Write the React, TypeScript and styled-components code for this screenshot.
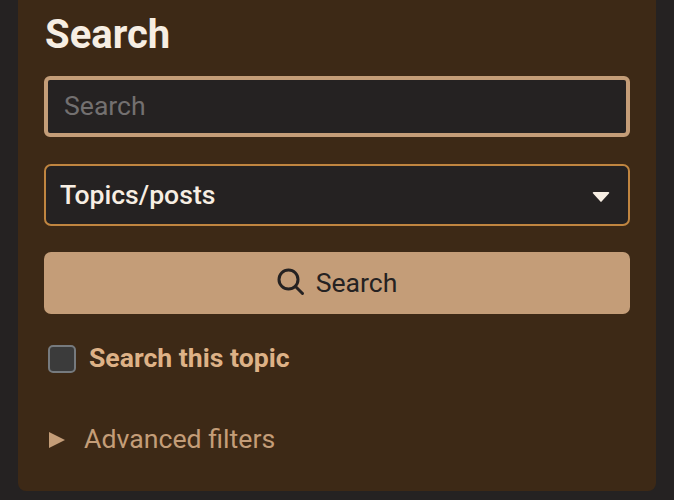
import { createGlobalStyle } from "styled-components";
import styled from "styled-components";

const GlobalStyle = createGlobalStyle`
  html, body {
    margin: 0;
    padding: 0;
    height: 100%;
    overflow: hidden;
    background-color: #252222;
    font-family: Roboto, "Liberation Sans", sans-serif;
  }
`;

const Page = styled.div`
  width: 674px;
  height: 500px;
  padding: 0 18px 9px;
  box-sizing: border-box;
  background-color: #252222;
`;

const Panel = styled.section`
  display: flex;
  flex-direction: column;
  height: 491px;
  box-sizing: border-box;
  padding: 0 26px;
  background-color: #3d2916;
  border-radius: 0 0 8px 8px;
`;

const Title = styled.h2`
  margin: 14px 0 0 1px;
  font-size: 40px;
  line-height: 42px;
  font-weight: 700;
  color: #f7eee3;
`;

const SearchInput = styled.input`
  display: block;
  box-sizing: border-box;
  width: 586px;
  height: 61px;
  margin-top: 20px;
  padding: 0 16px 2px;
  background-color: #252222;
  border: 4px solid #c49d78;
  border-radius: 6px;
  outline: none;
  font-family: inherit;
  font-size: 26.6px;
  color: #f7eee3;

  &::placeholder {
    color: #737070;
    opacity: 1;
  }
`;

const SelectBox = styled.div`
  display: flex;
  align-items: center;
  justify-content: space-between;
  box-sizing: border-box;
  width: 586px;
  height: 62px;
  margin-top: 27px;
  padding: 0 18px 2px 14px;
  background-color: #252222;
  border: 2px solid #c08540;
  border-radius: 7px;
  font-size: 26.6px;
  font-weight: 500;
  color: #f7eee3;

  svg {
    margin-top: 5px;
  }
`;

const SearchButton = styled.button`
  display: flex;
  align-items: center;
  justify-content: center;
  gap: 11px;
  width: 586px;
  height: 62px;
  margin-top: 26px;
  padding: 0 0 2px;
  background-color: #c49d78;
  border: none;
  border-radius: 7px;
  font-family: inherit;
  font-size: 26.6px;
  color: #252222;
`;

const CheckRow = styled.label`
  display: flex;
  align-items: center;
  gap: 13px;
  margin: 28px 0 0 4px;
  font-size: 26.6px;
  font-weight: 700;
  color: #deb287;
`;

const CheckBox = styled.input.attrs({ type: "checkbox" })`
  appearance: none;
  box-sizing: border-box;
  width: 28px;
  height: 28px;
  margin: 2px 0 0;
  background-color: #3b3b3b;
  border: 2px solid #767a7e;
  border-radius: 5px;
`;

const Filters = styled.div`
  display: flex;
  align-items: center;
  gap: 19px;
  margin: 50px 0 0 5px;
  font-size: 26.7px;
  color: #c49d78;

  svg {
    margin-top: 2px;
  }
`;

export default function App() {
  return (
    <>
      <GlobalStyle />
      <Page>
        <Panel>
          <Title>Search</Title>
          <SearchInput placeholder="Search" />
          <SelectBox>
            <span>Topics/posts</span>
            <svg width="18" height="12" viewBox="0 0 18 12">
              <path d="M1.500 1h15a.8.8 0 0 1 .6 1.300L9.600 10.600a.8.8 0 0 1-1.200 0L.9 2.300A.8.8 0 0 1 1.500 1z" fill="#f7eee3" />
            </svg>
          </SelectBox>
          <SearchButton>
            <svg width="28" height="28" viewBox="0 0 28 28" fill="none" stroke="#252222" strokeWidth="3" strokeLinecap="round">
              <circle cx="11.500" cy="11.500" r="9.500" />
              <path d="M18.500 18.500l7 7" />
            </svg>
            Search
          </SearchButton>
          <CheckRow>
            <CheckBox />
            Search this topic
          </CheckRow>
          <Filters>
            <svg width="16" height="16" viewBox="0 0 16 16">
              <path d="M0 0l16 8L0 16z" fill="#c49d78" />
            </svg>
            Advanced filters
          </Filters>
        </Panel>
      </Page>
    </>
  );
}
